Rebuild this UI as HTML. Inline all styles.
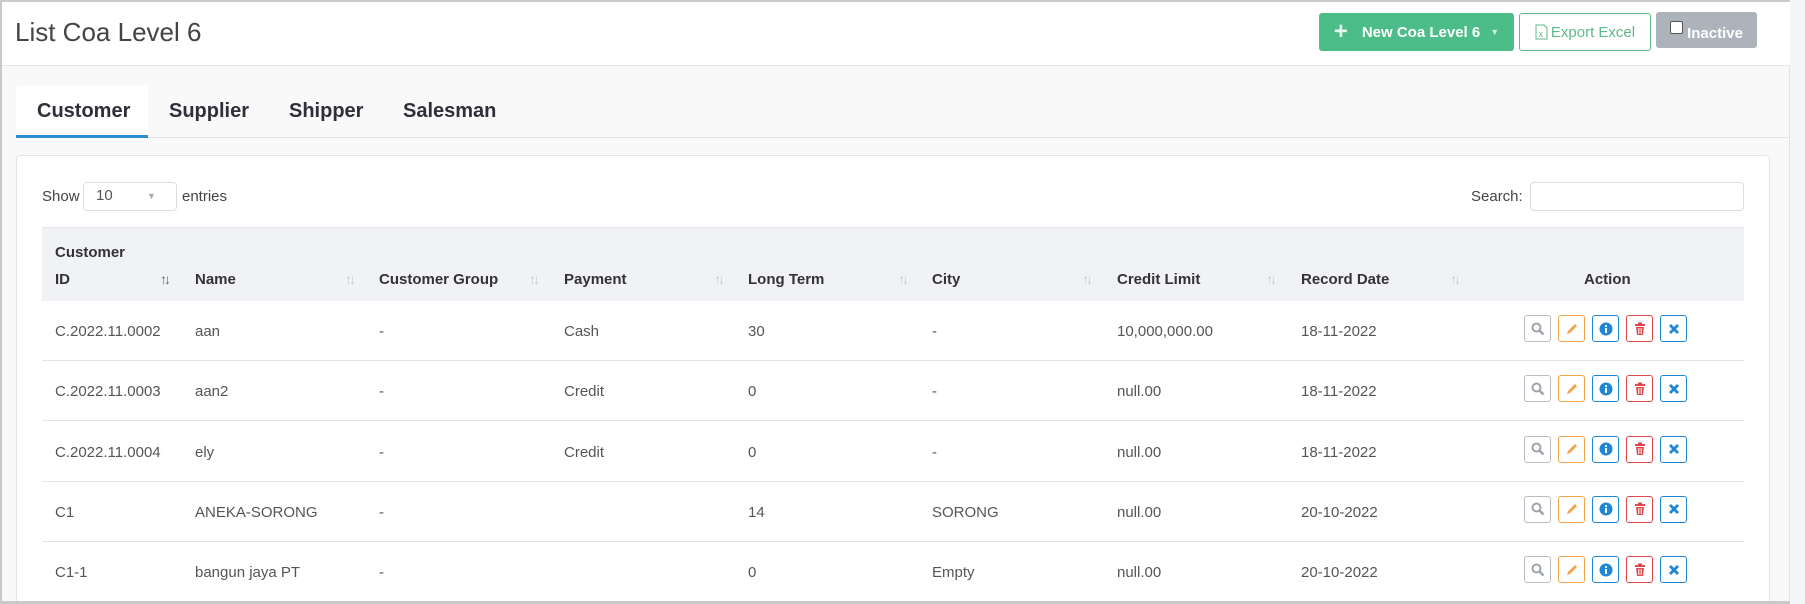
<!DOCTYPE html>
<html><head><meta charset="utf-8"><style>
*{box-sizing:border-box;margin:0;padding:0}
html,body{width:1805px;height:604px;overflow:hidden}
body{background:#f4f5f7;font-family:"Liberation Sans",Arial,sans-serif;position:relative;color:#555}
.frame{position:absolute;left:0;top:0;width:1790px;height:604px;border:2px solid #c9c9c9;border-right:1px solid #e3e3e3;background:#f9f9f9}
.hdr{position:absolute;left:0;top:0;width:1788px;height:64px;background:#fff;border-bottom:1px solid #e6e6e6}
.a{position:absolute;white-space:nowrap}
.title{left:15px;top:17px;font-size:26px;color:#444}
.btn{position:absolute;border-radius:3px;font-size:15px;display:flex;align-items:center;justify-content:center}
.tab{position:absolute;top:86px;font-size:20px;font-weight:bold;color:#2f2f3a}
.card{position:absolute;left:16px;top:155px;width:1754px;height:446px;background:#fff;border:1px solid #e4e4e4;border-bottom:none;border-radius:4px 4px 0 0}
.th{position:absolute;top:227px;left:42px;width:1702px;height:74px;background:#f1f2f6;border-top:1px solid #e3e3e3}
.hc{position:absolute;font-size:15px;font-weight:bold;color:#333;top:272px;line-height:1}
.sort{position:absolute;top:271px;font-size:14px;color:#c9cbcf;letter-spacing:-3px}
.row{position:absolute;left:42px;width:1702px;height:60px;border-bottom:1px solid #e3e3e3}
.c{position:absolute;font-size:15px;color:#555;top:22px}
.ab{position:absolute;top:14px;width:27px;height:27px;border:1px solid;border-radius:3px;display:flex;align-items:center;justify-content:center}
</style></head><body>
<div class="frame">
<div class="hdr"></div>
</div>
<div class="a title">List Coa Level 6</div>
<div class="btn" style="left:1319px;top:13px;width:195px;height:38px;background:#4cbc89;color:#fff;font-weight:bold"><span style="font-size:24px;color:#e8f6ef;margin-right:14px;font-weight:bold">+</span>New Coa Level 6<span style="font-size:9px;margin-left:10px;color:#cdeedd">▼</span></div>
<div class="btn" style="left:1519px;top:13px;width:132px;height:38px;border:1px solid #5fb98b;color:#5fb98b;background:#fff"><svg width="13" height="16" viewBox="0 0 13 16" style="margin-right:3px"><path d="M1 1h8l3 3v11H1z" fill="none" stroke="#5fb98b"/><text x="3.5" y="13" font-size="9" fill="#5fb98b" font-family="Liberation Sans">x</text></svg>Export Excel</div>
<div class="btn" style="left:1656px;top:12px;width:101px;height:36px;background:#adb3bb;color:#fff;font-weight:bold;align-items:flex-start;padding-top:9px"><span style="display:inline-block;width:13px;height:13px;background:#fff;border:1px solid #555;border-radius:2px;margin-right:4px"></span><span style="margin-top:4px">Inactive</span></div>

<div class="tab" style="left:16px;top:86px;width:132px;height:51px;background:#fff;border-radius:3px 3px 0 0"></div>
<div style="position:absolute;left:16px;top:137px;width:1772px;height:1px;background:#e3e3e3"></div>
<div style="position:absolute;left:16px;top:135px;width:132px;height:3px;background:#2c8fd6"></div>
<div class="tab" style="left:37px;top:100px">Customer</div>
<div class="tab" style="left:169px;top:100px">Supplier</div>
<div class="tab" style="left:289px;top:100px">Shipper</div>
<div class="tab" style="left:403px;top:100px">Salesman</div>

<div class="card"></div>
<div class="a" style="left:42px;top:188px;font-size:15px;color:#444">Show</div>
<div style="position:absolute;left:83px;top:182px;width:94px;height:29px;border:1px solid #ddd;border-radius:4px"></div>
<div class="a" style="left:96px;top:187px;font-size:15px;color:#555">10</div>
<div class="a" style="left:147px;top:191px;font-size:9px;color:#aaa">▼</div>
<div class="a" style="left:182px;top:188px;font-size:15px;color:#444">entries</div>
<div class="a" style="left:1471px;top:188px;font-size:15px;color:#444">Search:</div>
<div style="position:absolute;left:1530px;top:182px;width:214px;height:29px;border:1px solid #ddd;border-radius:4px"></div>

<div class="th"></div>
<div class="hc" style="left:55px;top:245px">Customer</div>
<div class="hc" style="left:55px">ID</div>
<div class="sort" style="left:160px;color:#666">↑↓</div>
<div class="hc" style="left:195px">Name</div><div class="sort" style="left:345px">↑↓</div>
<div class="hc" style="left:379px">Customer Group</div><div class="sort" style="left:529px">↑↓</div>
<div class="hc" style="left:564px">Payment</div><div class="sort" style="left:714px">↑↓</div>
<div class="hc" style="left:748px">Long Term</div><div class="sort" style="left:898px">↑↓</div>
<div class="hc" style="left:932px">City</div><div class="sort" style="left:1082px">↑↓</div>
<div class="hc" style="left:1117px">Credit Limit</div><div class="sort" style="left:1266px">↑↓</div>
<div class="hc" style="left:1301px">Record Date</div><div class="sort" style="left:1450px">↑↓</div>
<div class="hc" style="left:1584px">Action</div>

<div id="rows"></div>
<script>
var d=[["C.2022.11.0002","aan","-","Cash","30","-","10,000,000.00","18-11-2022"],
["C.2022.11.0003","aan2","-","Credit","0","-","null.00","18-11-2022"],
["C.2022.11.0004","ely","-","Credit","0","-","null.00","18-11-2022"],
["C1","ANEKA-SORONG","-","","14","SORONG","null.00","20-10-2022"],
["C1-1","bangun jaya PT","-","","0","Empty","null.00","20-10-2022"]];
var xs=[13,153,337,522,706,890,1075,1259];
var icons='<div class="ab" style="left:1482px;border-color:#b9bdc2"><svg width="14" height="14" viewBox="0 0 14 14"><circle cx="5.5" cy="5.5" r="4" fill="none" stroke="#9fa4aa" stroke-width="2"/><path d="M8.5 8.5L12.5 12.5" stroke="#9fa4aa" stroke-width="2.5"/></svg></div>'+
'<div class="ab" style="left:1516px;border-color:#f0a54a"><svg width="14" height="14" viewBox="0 0 14 14"><path d="M2 12l1-3 7-7 2 2-7 7z" fill="#f0a54a"/></svg></div>'+
'<div class="ab" style="left:1550px;border-color:#1f86d6"><svg width="14" height="14" viewBox="0 0 14 14"><circle cx="7" cy="7" r="6.5" fill="#1f86d6"/><rect x="6" y="6" width="2" height="5" fill="#fff"/><circle cx="7" cy="4" r="1.1" fill="#fff"/></svg></div>'+
'<div class="ab" style="left:1584px;border-color:#e0474f"><svg width="12" height="14" viewBox="0 0 12 14"><rect x="1" y="2" width="10" height="2" fill="#e0474f"/><rect x="4" y="0.5" width="4" height="2" fill="#e0474f"/><path d="M2 5h8l-1 8H3z" fill="#e0474f"/><path d="M4.5 6v6M6 6v6M7.5 6v6" stroke="#fff" stroke-width="0.7"/></svg></div>'+
'<div class="ab" style="left:1618px;border-color:#1f86d6"><svg width="12" height="12" viewBox="0 0 12 12"><path d="M2 2L10 10M10 2L2 10" stroke="#1f86d6" stroke-width="2.8"/></svg></div>';
var h='';
d.forEach(function(r,i){h+='<div class="row" style="top:'+(301+i*60.3)+'px">';r.forEach(function(t,j){h+='<div class="c" style="left:'+xs[j]+'px">'+t+'</div>'});h+=icons+'</div>'});
document.getElementById('rows').innerHTML=h;
</script>
<div style="position:absolute;left:0;top:601px;width:1790px;height:3px;background:#c9c9c9"></div>
</body></html>
